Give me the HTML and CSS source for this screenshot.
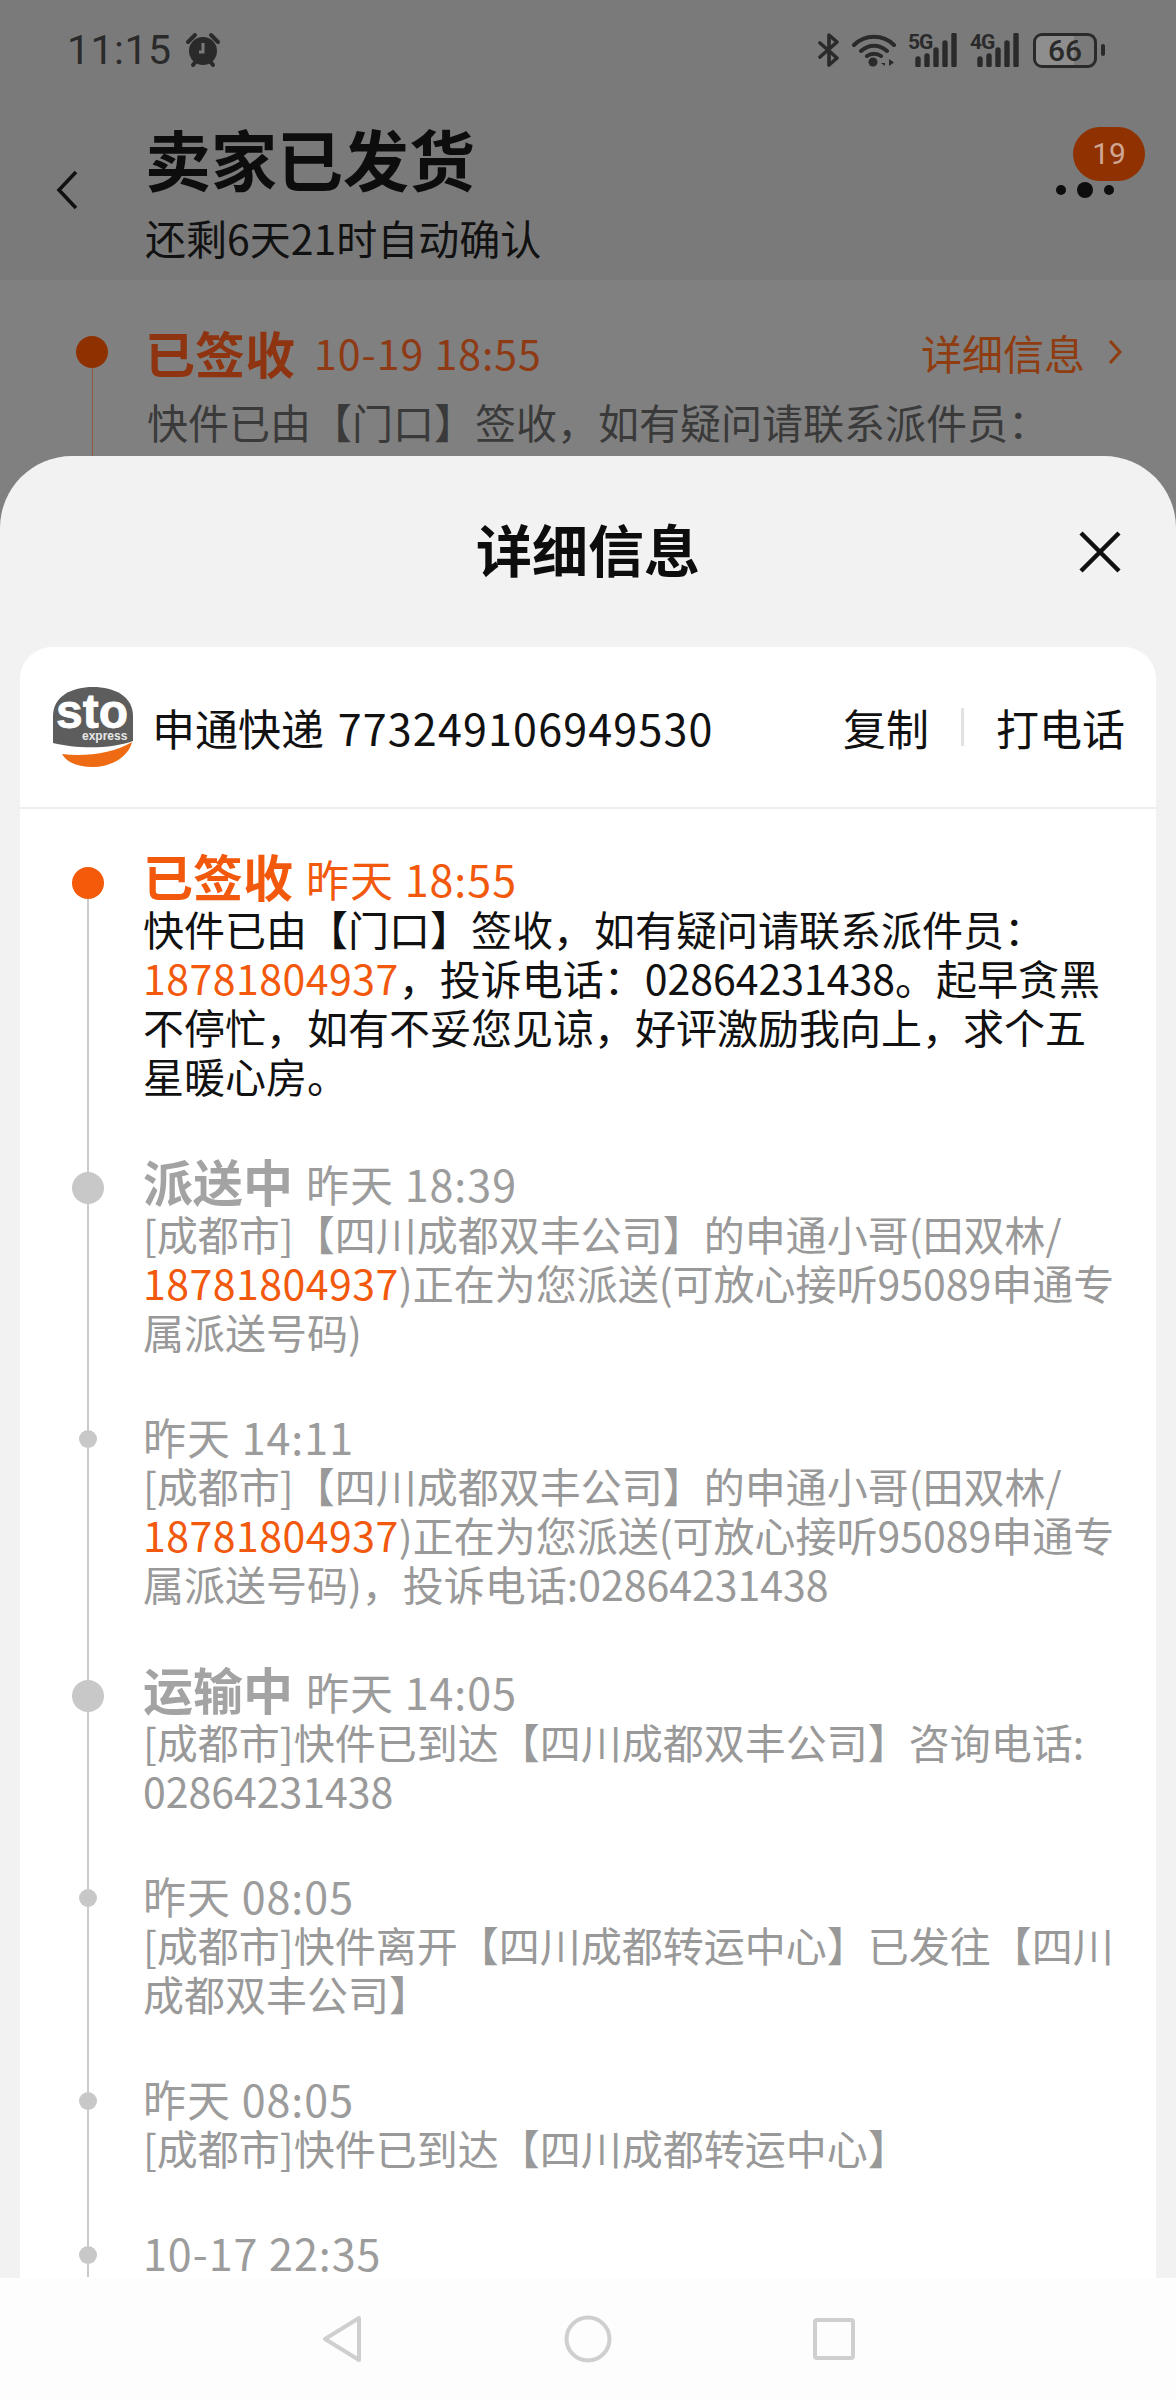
FILE: index.html
```html
<!DOCTYPE html>
<html lang="zh-CN">
<head>
  <meta charset="UTF-8" />
  <meta name="viewport" content="width=device-width, initial-scale=1.0"/>
  <title>卖家已发货</title>
  <link rel="stylesheet" href="styles.css">
</head>
<body>
  <div class="screen">
    <!-- dimmed order page behind the sheet -->
    <div class="statusbar">
      <span class="clock">11:15</span>
      <svg class="alarm" viewBox="0 0 36 36" width="36" height="36">
        <path d="M3 10 10 3M33 10 26 3M8 33l4-5M28 33l-4-5" fill="none" stroke="#2a2a2a" stroke-width="4" stroke-linecap="round"/>
        <circle cx="18" cy="19" r="14" fill="#2a2a2a"/>
        <path d="M18 11v9h-4" fill="none" stroke="#7a7a7a" stroke-width="3"/>
      </svg>
      <div class="status-icons">
        <svg viewBox="0 0 22 34" width="22" height="34">
          <path d="M2 10 19 25 11 32V2l8 7L2 24" fill="none" stroke="#2a2a2a" stroke-width="3.6" stroke-linejoin="round" stroke-linecap="round"/>
        </svg>
        <svg class="wifi" viewBox="0 0 44 34" width="44" height="34">
          <path d="M2 12C13 1 31 1 42 12M9 18c8-7 18-7 26 0M15 23c4-3 10-3 14 0" fill="none" stroke="#2a2a2a" stroke-width="4" stroke-linecap="round"/>
          <circle cx="21" cy="29" r="4.500" fill="#2a2a2a"/>
          <path d="M33 26v7l-4-3h4M37 26v7l5-3.500z" fill="#2a2a2a"/>
        </svg>
        <div class="signal">
          <span class="net">5G</span>
          <svg viewBox="0 0 50 34" width="50" height="34">
            <path d="M10 26v6M19 23v9M28 17v15M37 10v22M46 2v30" stroke="#2a2a2a" stroke-width="5.400" stroke-linecap="round"/>
          </svg>
        </div>
        <div class="signal">
          <span class="net">4G</span>
          <svg viewBox="0 0 50 34" width="50" height="34">
            <path d="M10 26v6M19 23v9M28 17v15M37 10v22M46 2v30" stroke="#2a2a2a" stroke-width="5.400" stroke-linecap="round"/>
          </svg>
        </div>
        <div class="battery"><span class="battery-fill"></span><span class="battery-num">66</span></div>
        <span class="battery-tip"></span>
      </div>
    </div>

    <div class="order-head">
      <svg class="back" viewBox="0 0 24 40" width="24" height="40">
        <path d="M21 2 4 20l17 18" fill="none" stroke="#111" stroke-width="3.6"/>
      </svg>
      <div class="order-titles">
        <div class="order-title">卖家已发货</div>
        <div class="order-sub">还剩6天21时自动确认</div>
      </div>
      <div class="menu">
        <span class="menu-dot"></span>
        <span class="menu-dot big"></span>
        <span class="menu-dot"></span>
        <span class="badge">19</span>
      </div>
    </div>

    <div class="track">
      <div class="track-row">
        <span class="track-dot"></span>
        <span class="track-title">已签收</span>
        <span class="track-date">10-19 18:55</span>
        <span class="track-more">详细信息
          <svg viewBox="0 0 14 26" width="14" height="26"><path d="M2 2l10 11L2 24" fill="none" stroke="#8e3c10" stroke-width="3"/></svg>
        </span>
      </div>
      <div class="track-body">快件已由【门口】签收，如有疑问请联系派件员：</div>
    </div>

    <!-- bottom sheet -->
    <div class="sheet">
      <div class="sheet-head">
        <div class="sheet-title">详细信息</div>
        <svg class="close" viewBox="0 0 42 42" width="42" height="42">
          <path d="M2 2l38 38M40 2 2 40" stroke="#111" stroke-width="4.500"/>
        </svg>
      </div>

      <div class="card">
        <div class="card-head">
          <svg class="logo" viewBox="0 0 82 82" width="82" height="82">
            <path d="M1 30C1 10 20 1 41 1s40 9 40 29v25C60 63 25 63 1 57z" fill="#5d5d5d"/>
            <path d="M10 68c24 3 52-1 70-12-3 14-20 25-39 25-14 0-26-4-31-13z" fill="#ee6a13"/>
            <text class="logo-sto" x="4" y="42">sto</text>
            <text class="logo-express" x="30" y="54">express</text>
          </svg>
          <div class="waybill">申通快递 <span class="waybill-no">773249106949530</span></div>
          <div class="card-action">复制</div>
          <span class="card-sep"></span>
          <div class="card-action">打电话</div>
        </div>

        <div class="timeline">
          <div class="item first">
            <span class="dot big current"></span>
            <div class="item-head titled"><span class="item-title">已签收</span><span class="item-date">昨天 18:55</span></div>
            <div class="item-text">快件已由【门口】签收，如有疑问请联系派件员：<br><span class="phone">18781804937</span>，投诉电话：02864231438。起早贪黑<br>不停忙，如有不妥您见谅，好评激励我向上，求个五<br>星暖心房。</div>
          </div>
          <div class="item">
            <span class="dot big"></span>
            <div class="item-head titled"><span class="item-title">派送中</span><span class="item-date">昨天 18:39</span></div>
            <div class="item-text">[成都市]【四川成都双丰公司】的申通小哥(田双林/<br><span class="phone">18781804937</span>)正在为您派送(可放心接听95089申通专<br>属派送号码)</div>
          </div>
          <div class="item">
            <span class="dot"></span>
            <div class="item-head"><span class="item-date">昨天 14:11</span></div>
            <div class="item-text">[成都市]【四川成都双丰公司】的申通小哥(田双林/<br><span class="phone">18781804937</span>)正在为您派送(可放心接听95089申通专<br>属派送号码)，投诉电话:02864231438</div>
          </div>
          <div class="item">
            <span class="dot big"></span>
            <div class="item-head titled"><span class="item-title">运输中</span><span class="item-date">昨天 14:05</span></div>
            <div class="item-text">[成都市]快件已到达【四川成都双丰公司】咨询电话:<br>02864231438</div>
          </div>
          <div class="item">
            <span class="dot"></span>
            <div class="item-head"><span class="item-date">昨天 08:05</span></div>
            <div class="item-text">[成都市]快件离开【四川成都转运中心】已发往【四川<br>成都双丰公司】</div>
          </div>
          <div class="item">
            <span class="dot"></span>
            <div class="item-head"><span class="item-date">昨天 08:05</span></div>
            <div class="item-text">[成都市]快件已到达【四川成都转运中心】</div>
          </div>
          <div class="item">
            <span class="dot"></span>
            <div class="item-head"><span class="item-date">10-17 22:35</span></div>
          </div>
        </div>
      </div>

      <div class="navbar">
        <svg viewBox="0 0 44 48" width="44" height="48"><path d="M39 3v42L5 24z" fill="none" stroke="#cfcfcf" stroke-width="4" stroke-linejoin="round"/></svg>
        <svg viewBox="0 0 48 48" width="48" height="48"><circle cx="24" cy="24" r="21.500" fill="none" stroke="#cfcfcf" stroke-width="4"/></svg>
        <svg viewBox="0 0 44 44" width="44" height="44"><rect x="3" y="3" width="38" height="38" rx="2" fill="none" stroke="#cfcfcf" stroke-width="4"/></svg>
      </div>
    </div>
  </div>
</body>
</html>
```

FILE: styles.css
```css
* {
  box-sizing: border-box;
}
body {
  margin: 0;
  font-family: "Noto Sans CJK SC", "Noto Sans", sans-serif;
  color: #111;
}
.screen {
  position: relative;
  width: 1176px;
  height: 2400px;
  overflow: hidden;
  background-color: #808080;
}

/* status bar */
.statusbar {
  display: flex;
  align-items: center;
  height: 100px;
  padding: 0 71px 0 67px;
  background-color: #7a7a7a;
  color: #2a2a2a;
}
.clock {
  font-family: Roboto, sans-serif;
  font-size: 41px;
  letter-spacing: 0.5px;
}
.alarm {
  margin-left: 13px;
}
.status-icons {
  display: flex;
  align-items: center;
  margin-left: auto;
}
.wifi {
  margin-left: 12px;
}
.signal {
  position: relative;
  margin-left: 12px;
}
.signal svg {
  display: block;
}
.net {
  position: absolute;
  left: 0;
  top: -1px;
  font-family: Roboto, sans-serif;
  font-size: 21px;
  font-weight: 700;
  line-height: 21px;
  letter-spacing: -1px;
}
.battery {
  position: relative;
  width: 64px;
  height: 35px;
  margin-left: 13px;
  border: 3px solid #2a2a2a;
  border-radius: 9px;
  overflow: hidden;
  text-align: center;
}
.battery-fill {
  position: absolute;
  left: 0;
  top: 0;
  bottom: 0;
  width: 66%;
  background-color: #8e8e8e;
}
.battery-num {
  position: relative;
  display: block;
  font-family: Roboto, sans-serif;
  font-size: 30px;
  font-weight: 500;
  line-height: 29px;
}
.battery-tip {
  width: 4px;
  height: 12px;
  margin-left: 4px;
  border-radius: 2px;
  background-color: #2a2a2a;
}

/* order header */
.order-head {
  display: flex;
  align-items: center;
  height: 180px;
  padding: 0 62px 0 55px;
  background-color: #7a7a7a;
}
.order-titles {
  margin-left: 66px;
  padding-top: 3px;
}
.order-title {
  font-size: 66px;
  font-weight: 700;
  line-height: 70px;
  color: #0d0d0d;
}
.order-sub {
  margin-top: 20px;
  font-size: 41px;
  line-height: 50px;
  color: #111;
}
.menu {
  position: relative;
  display: flex;
  align-items: center;
  gap: 11px;
  margin-left: auto;
}
.menu-dot {
  width: 10px;
  height: 10px;
  border-radius: 50%;
  background-color: #0d0d0d;
}
.menu-dot.big {
  width: 16px;
  height: 16px;
}
.badge {
  position: absolute;
  left: 17px;
  top: -55px;
  width: 72px;
  height: 54px;
  border-radius: 27px;
  background-color: #8f3100;
  color: #cfa693;
  font-family: Roboto, sans-serif;
  font-size: 30px;
  line-height: 54px;
  text-align: center;
}

/* tracking row on the page behind */
.track {
  position: relative;
  padding: 47px 54px 0 76px;
}
.track::before {
  content: "";
  position: absolute;
  left: 92px;
  top: 88px;
  width: 1px;
  height: 100px;
  background-color: #8e5a42;
}
.track-row {
  display: flex;
  align-items: center;
  height: 50px;
}
.track-dot {
  width: 32px;
  height: 32px;
  border-radius: 50%;
  background-color: #8f3000;
}
.track-title {
  margin-left: 37px;
  font-size: 50px;
  font-weight: 700;
  color: #8e3410;
}
.track-date {
  margin-left: 19px;
  font-size: 41px;
  letter-spacing: 1px;
  color: #8e3a14;
}
.track-more {
  display: flex;
  align-items: center;
  gap: 23px;
  margin-left: auto;
  font-size: 41px;
  color: #8e3c10;
}
.track-body {
  margin-top: 19px;
  padding-left: 71px;
  font-size: 41px;
  line-height: 50px;
  color: #3a3a3a;
}

/* bottom sheet */
.sheet {
  position: absolute;
  left: 0;
  right: 0;
  top: 456px;
  bottom: 0;
  display: flex;
  flex-direction: column;
  border-radius: 72px 72px 0 0;
  background-color: #f2f2f2;
}
.sheet-head {
  display: grid;
  grid-template-columns: 1fr auto 1fr;
  align-items: center;
  height: 191px;
  padding: 0 55px;
}
.sheet-title {
  grid-column: 2;
  margin-bottom: 8px;
  font-size: 56px;
  font-weight: 700;
  line-height: 70px;
  color: #0d0d0d;
}
.close {
  grid-column: 3;
  justify-self: end;
}
.card {
  flex: 1;
  min-height: 0;
  margin: 0 20px;
  overflow: hidden;
  border-radius: 32px 32px 0 0;
  background-color: #fff;
}
.card-head {
  display: flex;
  align-items: center;
  height: 162px;
  padding: 0 31px 0 32px;
  border-bottom: 2px solid #eee;
  font-size: 43px;
}
.logo {
  flex-shrink: 0;
}
.logo-sto {
  font-family: "Liberation Sans", sans-serif;
  font-size: 48px;
  font-weight: 700;
  fill: #fff;
  stroke: #fff;
  stroke-width: 0.8px;
}
.logo-express {
  font-family: "Liberation Sans", sans-serif;
  font-size: 12px;
  font-weight: 700;
  fill: #e8e8e8;
}
.waybill {
  margin-left: 18px;
  margin-right: auto;
}
.waybill-no {
  margin-left: 4px;
  letter-spacing: 1.2px;
}
.card-sep {
  width: 3px;
  height: 38px;
  margin: 0 32px;
  background-color: #e2e2e2;
}

/* timeline */
.timeline {
  position: relative;
  display: flex;
  flex-direction: column;
  gap: 55px;
  padding: 41px 0 0 123px;
}
.timeline::before {
  content: "";
  position: absolute;
  left: 67px;
  top: 60px;
  bottom: 0;
  width: 2px;
  background-color: #cbcbcb;
}
.item {
  position: relative;
  color: #999;
}
.dot {
  position: absolute;
  left: -64px;
  top: 19px;
  width: 18px;
  height: 18px;
  border-radius: 50%;
  background-color: #c8c8c8;
}
.dot.big {
  left: -71px;
  top: 17px;
  width: 32px;
  height: 32px;
}
.dot.current {
  background-color: #f45a0a;
}
.item-head {
  display: flex;
  align-items: baseline;
  height: 50px;
  line-height: 50px;
}
.item-head.titled {
  height: 54px;
}
.item-title {
  margin-right: 13px;
  font-size: 50px;
  font-weight: 700;
  color: #a3a3a3;
}
.item-date {
  font-size: 43px;
  letter-spacing: 1px;
  color: #9c9c9c;
}
.item-text {
  font-size: 41px;
  line-height: 49px;
  white-space: nowrap;
}
.first .item-title,
.first .item-date {
  color: #f2590d;
}
.first .item-text {
  color: #111;
}
.phone {
  letter-spacing: 0.5px;
  color: #f2590d;
}

/* system nav */
.navbar {
  display: flex;
  align-items: center;
  justify-content: center;
  gap: 200px;
  flex-shrink: 0;
  height: 122px;
  background-color: #fdfdfd;
}
```
